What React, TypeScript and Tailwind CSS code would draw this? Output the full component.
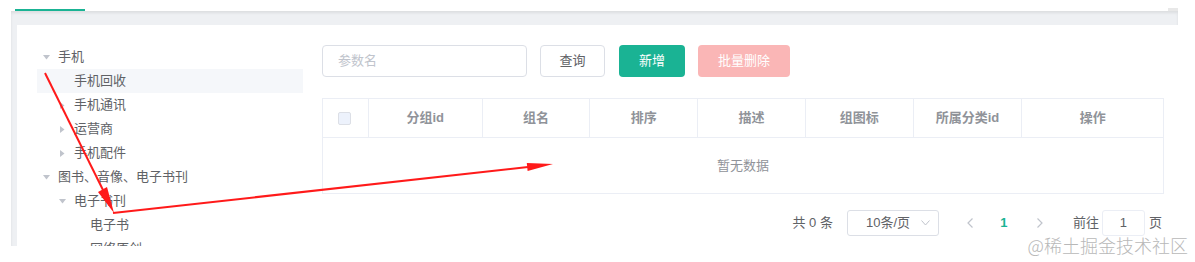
import React from "react";

type Node = { label: string; level: number; caret: "down" | "right" | "none"; active?: boolean };

const tree: Node[] = [
  { label: "手机", level: 0, caret: "down" },
  { label: "手机回收", level: 1, caret: "none", active: true },
  { label: "手机通讯", level: 1, caret: "right" },
  { label: "运营商", level: 1, caret: "right" },
  { label: "手机配件", level: 1, caret: "right" },
  { label: "图书、音像、电子书刊", level: 0, caret: "down" },
  { label: "电子书刊", level: 1, caret: "down" },
  { label: "电子书", level: 2, caret: "none" },
  { label: "网络原创", level: 2, caret: "none" },
];

const padByLevel = ["pl-[4px]", "pl-[20px]", "pl-[36px]"];

function Caret({ dir }: { dir: "down" | "right" | "none" }) {
  return (
    <span className="w-[10px] mr-[7px] flex items-center justify-center">
      {dir === "down" && (
        <svg width="7" height="5" viewBox="0 0 7 5">
          <path d="M0 0 L7 0 L3.5 4.5 Z" fill="#c0c4cc" />
        </svg>
      )}
      {dir === "right" && (
        <svg width="5" height="7" viewBox="0 0 5 7">
          <path d="M0 0 L4.5 3.5 L0 7 Z" fill="#c0c4cc" />
        </svg>
      )}
    </span>
  );
}

const cols = [
  { w: "w-[114px]", t: "分组id" },
  { w: "w-[108px]", t: "组名" },
  { w: "w-[108px]", t: "排序" },
  { w: "w-[108px]", t: "描述" },
  { w: "w-[108px]", t: "组图标" },
  { w: "w-[109px]", t: "所属分类id" },
  { w: "w-[141px]", t: "操作" },
];

export default function App() {
  return (
    <div className="relative w-[1195px] h-[262px] overflow-hidden bg-white font-['Liberation_Sans','Noto_Sans_CJK_SC',sans-serif] text-[13px] text-[#606266]">
      {/* tab indicator */}
      <div className="h-[11px] flex items-end justify-between">
        <div className="ml-[15px] w-[70px] h-[2px] bg-[#1ab394]" />
        <div className="mr-[17px] w-[10px] h-[3px] bg-[#e8e8e8]" />
      </div>

      {/* gray container */}
      <div className="ml-[11px] w-[1167px] h-[235px] bg-[#eef0f3] pt-[14px] pl-[6px] shadow-[inset_0_2px_3px_rgba(0,0,0,0.08)]">
        <div className="w-[1178px] h-[221px] overflow-hidden bg-white flex pl-[20px] pt-[20px]">
          {/* tree */}
          <div className="w-[266px] shrink-0 leading-[24px]">
            {tree.map((n, i) => (
              <div
                key={i}
                className={`h-[24px] flex items-center ${padByLevel[n.level]} ${n.active ? "bg-[#f5f7fa]" : ""}`}
              >
                <Caret dir={n.caret} />
                <span>{n.label}</span>
              </div>
            ))}
          </div>

          {/* main */}
          <div className="ml-[19px] w-[842px] shrink-0">
            {/* toolbar */}
            <div className="flex items-center h-[32px]">
              <div className="w-[205px] h-[32px] border border-[#dcdfe6] rounded-[4px] flex items-center pl-[15px] text-[#c0c4cc]">
                参数名
              </div>
              <button className="ml-[13px] w-[65px] h-[32px] border border-[#dcdfe6] rounded-[4px] bg-white text-[#606266] text-[13px]">
                查询
              </button>
              <button className="ml-[14px] w-[66px] h-[32px] rounded-[4px] bg-[#1ab394] text-white text-[13px]">
                新增
              </button>
              <button className="ml-[13px] w-[92px] h-[32px] rounded-[4px] bg-[#fab6b6] text-white text-[13px]">
                批量删除
              </button>
            </div>

            {/* table */}
            <div className="mt-[21px] border border-[#ebeef5]">
              <div className="flex h-[39px] border-b border-[#ebeef5]">
                <div className="w-[46px] flex items-center pl-[15px] border-r border-[#ebeef5]">
                  <span className="w-[13px] h-[13px] rounded-[2px] border border-[#dcdfe6] bg-[#edf2fc]" />
                </div>
                {cols.map((c, i) => (
                  <div
                    key={c.t}
                    className={`${c.w} flex items-center justify-center font-bold text-[#909399] ${i < cols.length - 1 ? "border-r border-[#ebeef5]" : ""}`}
                  >
                    {c.t}
                  </div>
                ))}
              </div>
              <div className="h-[55px] flex items-center justify-center text-[#909399]">暂无数据</div>
            </div>

            {/* pagination */}
            <div className="mt-[16px] flex items-center justify-end pr-[2px] h-[26px] text-[#606266]">
              <span>共 0 条</span>
              <div className="ml-[14px] w-[92px] h-[26px] border border-[#dcdfe6] rounded-[3px] flex items-center justify-between pl-[18px] pr-[8px]">
                <span>10条/页</span>
                <svg width="9" height="6" viewBox="0 0 9 6">
                  <path d="M0.5 0.5 L4.5 5 L8.5 0.5" fill="none" stroke="#c0c4cc" strokeWidth="1" />
                </svg>
              </div>
              <span className="ml-[16px] w-[30px] flex justify-center">
                <svg width="6" height="10" viewBox="0 0 6 10">
                  <path d="M5.5 0.5 L1 5 L5.5 9.5" fill="none" stroke="#c0c4cc" strokeWidth="1.2" />
                </svg>
              </span>
              <span className="ml-[4px] w-[30px] text-center font-bold text-[#1ab394]">1</span>
              <span className="ml-[6px] w-[30px] flex justify-center">
                <svg width="6" height="10" viewBox="0 0 6 10">
                  <path d="M0.5 0.5 L5 5 L0.5 9.5" fill="none" stroke="#c0c4cc" strokeWidth="1.2" />
                </svg>
              </span>
              <span className="ml-[18px]">前往</span>
              <div className="ml-[3px] w-[43px] h-[26px] border border-[#ebeef5] rounded-[3px] flex items-center justify-center">
                1
              </div>
              <span className="ml-[4px]">页</span>
            </div>
          </div>
        </div>
      </div>

      {/* red annotation arrows */}
      <svg className="absolute left-0 top-0 pointer-events-none" width="1195" height="262" viewBox="0 0 1195 262">
        <line x1="45" y1="73" x2="103" y2="190" stroke="#ff1a1a" strokeWidth="2" />
        <polygon points="114,213 98,192 107,187" fill="#ff1a1a" />
        <line x1="113" y1="213" x2="528" y2="167" stroke="#ff1a1a" strokeWidth="2" />
        <polygon points="553,164 527.6,171 526.8,163" fill="#ff1a1a" />
      </svg>

      {/* watermark */}
      <div className="absolute right-[7px] top-[233px] text-[18px] leading-[24px] text-[#b8b8b8] font-['Noto_Sans_CJK_SC',sans-serif] font-light">
        @稀土掘金技术社区
      </div>
    </div>
  );
}
